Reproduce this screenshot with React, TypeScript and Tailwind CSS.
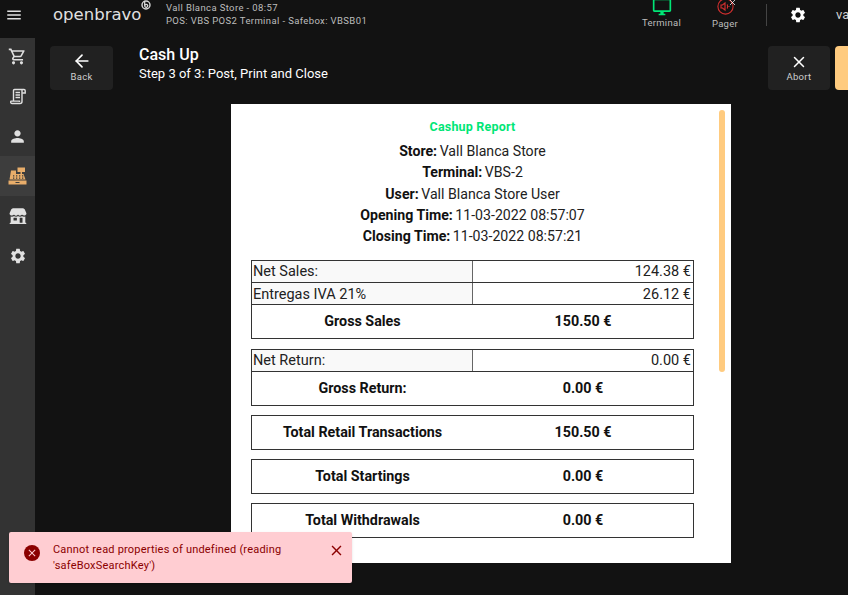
import { ArrowLeft, X } from 'lucide-react'
import { IoStorefront } from 'react-icons/io5'
import { MdClose, MdMenu, MdOutlineDesktopWindows, MdOutlineShoppingCart, MdPerson, MdSettings } from 'react-icons/md'

const INFO = [
  ['Store:', 'Vall Blanca Store'],
  ['Terminal:', 'VBS-2'],
  ['User:', 'Vall Blanca Store User'],
  ['Opening Time:', '11-03-2022 08:57:07'],
  ['Closing Time:', '11-03-2022 08:57:21'],
]

function ScrollIcon() {
  return (
    <svg width="16" height="17" viewBox="0 0 16 17" fill="none" stroke="currentColor" strokeWidth="1.4">
      <path d="M3.500 13V2.500a1 1 0 0 1 1-1h9.500a1.200 1.200 0 0 1 1.200 1.200V5h-3" />
      <path d="M12 1.800V13.500a2 2 0 0 1-2 2H2.500a1.500 1.500 0 0 1-1.500-2.400h8.500v1" />
      <path d="M5.500 4.500h4.500M5.500 7h4.500M5.500 9.500h4.500" />
    </svg>
  )
}

function RegisterIcon() {
  return (
    <svg width="19" height="18" viewBox="0 0 19 18" fill="#e8ad6a">
      <path d="M9.500 0.500h7.500v4.500h-3v2h-1.500v-2h-3z" />
      <path fillRule="evenodd" d="M3 3.500h5v3.500h7.500l2 5.500H1.500zM5 8.200v1.300h1.300V8.200zM8 8.200v1.300h1.300V8.200zM11 8.200v1.300h1.300V8.200zM14 8.200v1.300h1.300V8.200zM5 10.500v1.300h1.300v-1.300zM8 10.500v1.300h1.300v-1.300zM11 10.500v1.300h1.300v-1.300zM14 10.500v1.300h1.300v-1.300z" />
      <path d="M0.500 13.500h18v4h-18z" />
      <path d="M7.500 15h4v1h-4z" fill="#3d3d3d" />
    </svg>
  )
}

function PagerIcon() {
  return (
    <svg width="17" height="17" viewBox="0 0 17 17" fill="none" stroke="#d32f2f" strokeWidth="1.1">
      <circle cx="8.500" cy="8.500" r="7.600" />
      <path d="M4 7v3h1.500L8 12V5L5.500 7H4zM10 6.500c.8.600.8 3.400 0 4M11.500 8.500h1" />
    </svg>
  )
}

function LogoMark() {
  return (
    <svg className="absolute left-[88px] -top-[3px]" width="10" height="10" viewBox="0 0 10 10" fill="none" stroke="#d8d8d8">
      <circle cx="5" cy="5" r="4" strokeWidth="1.400" />
      <circle cx="5.200" cy="5.800" r="1.500" strokeWidth="1.300" />
      <path d="M3.700 1.500v4" strokeWidth="1.300" />
    </svg>
  )
}

function Side({ children, active }: { children: React.ReactNode; active?: boolean }) {
  return (
    <div className={`h-10 flex items-center justify-center text-[#e0e0e0] ${active ? 'bg-[#3d3d3d]' : ''}`}>
      {children}
    </div>
  )
}

function Amounts({ label, value, low }: { label: string; value: string; low?: boolean }) {
  return (
    <div className={`flex h-[21px] text-[14.5px] text-[#212121] ${low ? 'leading-[23px]' : 'leading-[21px]'}`}>
      <div className="w-[221px] shrink-0 pl-[1px] bg-[#f9f9f9] border-r border-[#666]">{label}</div>
      <div className="flex-1 text-right pr-[2px]">{value}</div>
    </div>
  )
}

function Total({ label, value }: { label: string; value: string }) {
  return (
    <div className="flex items-center h-[33px] text-[14.300px] font-bold text-[#111]">
      <div className="w-[221px] shrink-0 text-center">{label}</div>
      <div className="flex-1 text-center">{value}</div>
    </div>
  )
}

export default function App() {
  return (
    <div
      className="relative w-[848px] h-[595px] overflow-hidden bg-[#121212] text-white"
      style={{ fontFamily: 'Roboto, sans-serif' }}
    >
      {/* top bar */}
      <header className="flex items-center h-[38px] pb-[8px] overflow-hidden">
        <div className="w-[53px] shrink-0 pl-[5px] text-[#e0e0e0]">
          <MdMenu size={18} />
        </div>
        <div className="relative w-[113px] shrink-0">
          <span className="text-[16.500px] leading-none text-[#e0e0e0]" style={{ fontFamily: '"DejaVu Sans", sans-serif' }}>
            openbravo
          </span>
          <LogoMark />
        </div>
        <div className="w-[474px] -mt-[3px] shrink-0 text-[9.500px] leading-[13px] tracking-[0.38px] text-[#bdbdbd]">
          <div>Vall Blanca Store - 08:57</div>
          <div>POS: VBS POS2 Terminal - Safebox: VBSB01</div>
        </div>
        <div className="w-[43px] mb-[6px] shrink-0 flex flex-col items-center text-[9.500px] tracking-[0.3px] text-[#bdbdbd]">
          <MdOutlineDesktopWindows size={20} className="text-[#00e676] -mt-[3px]" />
          <span className="leading-[11px] -mb-[3px]">Terminal</span>
        </div>
        <div className="relative w-[40px] ml-[22px] mb-[5px] shrink-0 flex flex-col items-center text-[9.500px] tracking-[0.3px] text-[#bdbdbd]">
          <span className="-mt-[2px] h-[20px]"><PagerIcon /></span>
          <span className="leading-[11px] -mb-[3px]">Pager</span>
          <X size={9} className="absolute left-[23px] -top-[2px] text-white" strokeWidth={2} />
        </div>
        <div className="ml-[21px] w-px h-[22px] bg-[#444] shrink-0" />
        <MdSettings size={18} className="ml-[22px] shrink-0 text-white" />
        <span className="ml-[29px] text-[13px] text-[#d0d0d0] whitespace-nowrap">va</span>
      </header>

      <div className="flex h-[557px]">
        {/* sidebar */}
        <aside className="w-[35px] shrink-0 bg-[#333333]">
          <div className="-mt-[2px]">
            <Side><MdOutlineShoppingCart size={19} /></Side>
            <Side><ScrollIcon /></Side>
            <Side><MdPerson size={19} /></Side>
            <Side active><RegisterIcon /></Side>
            <Side><IoStorefront size={18} /></Side>
            <Side><MdSettings size={18} /></Side>
          </div>
        </aside>

        {/* main */}
        <main className="flex-1 min-w-0">
          <div className="flex h-[66px] pt-[8px] pl-[15px]">
            <button className="w-[63px] h-[44px] pb-[3px] shrink-0 rounded bg-[#212121] flex flex-col items-center justify-center text-[#cfcfcf]">
              <ArrowLeft size={20} className="text-white" />
              <span className="text-[9.500px] tracking-[0.3px] leading-[12px]">Back</span>
            </button>
            <div className="ml-[26px] -mt-[1px] w-[629px] shrink-0 whitespace-nowrap">
              <div className="text-[16px] font-medium leading-[19px]">Cash Up</div>
              <div className="text-[13px] leading-[19px]">Step 3 of 3: Post, Print and Close</div>
            </div>
            <button className="w-[62px] h-[44px] pb-[1px] shrink-0 rounded bg-[#212121] flex flex-col items-center justify-center text-[#cfcfcf]">
              <X size={18} className="text-white" />
              <span className="text-[9.500px] tracking-[0.3px] leading-[12px]">Abort</span>
            </button>
            <div className="ml-[5px] w-[30px] h-[44px] shrink-0 rounded-l bg-[#ffcb7f]" />
          </div>

          {/* report */}
          <div className="relative ml-[196px] w-[500px] h-[459px] bg-white overflow-hidden pt-[16px]">
            <div className="w-[483px] text-center text-[12.500px] tracking-[0.2px] leading-[14px] font-bold text-[#00e676]">Cashup Report</div>
            <div className="w-[483px] mt-[7px] mb-[13px]">
              {INFO.map(([k, v]) => (
                <div key={k} className="text-center text-[14.150px] leading-[21.250px] text-[#212121]">
                  <b className="font-bold text-[#111]">{k}</b> <span className="-ml-[1px]">{v}</span>
                </div>
              ))}
            </div>
            <div className="ml-[20px] w-[443px] flex flex-col text-black">
              <div className="border border-[#333] mb-[10px] [&>*+*]:box-content [&>*+*]:border-t [&>*+*]:border-[#333]">
                <Amounts label="Net Sales:" value="124.38 €" />
                <Amounts low label="Entregas IVA 21%" value="26.12 €" />
                <Total label="Gross Sales" value="150.50 €" />
              </div>
              <div className="border border-[#333] mb-[9px] [&>*+*]:box-content [&>*+*]:border-t [&>*+*]:border-[#333]">
                <Amounts label="Net Return:" value="0.00 €" />
                <Total label="Gross Return:" value="0.00 €" />
              </div>
              <div className="border border-[#333] mb-[9px]"><Total label="Total Retail Transactions" value="150.50 €" /></div>
              <div className="border border-[#333] mb-[9px]"><Total label="Total Startings" value="0.00 €" /></div>
              <div className="border border-[#333] mb-[9px]"><Total label="Total Withdrawals" value="0.00 €" /></div>
            </div>
            <div className="absolute right-[6px] top-[6px] w-[6px] h-[262px] rounded-full bg-[#ffcb7f]" />
          </div>
        </main>
      </div>

      {/* toast */}
      <div className="absolute left-[9px] top-[532px] w-[343px] h-[51px] rounded-[2px] bg-[#ffcdd2] shadow flex items-center text-[#8b0000]">
        <div className="ml-[15px] mb-[10px] w-[16px] h-[16px] rounded-full bg-[#8b0000] flex items-center justify-center shrink-0">
          <MdClose size={12} className="text-[#ffcdd2]" />
        </div>
        <div className="ml-[13px] w-[250px] text-[11px] tracking-[0.2px] leading-[16px]">
          Cannot read properties of undefined (reading 'safeBoxSearchKey')
        </div>
        <MdClose size={17} className="ml-[25px] mb-[14px] shrink-0" />
      </div>
    </div>
  )
}
